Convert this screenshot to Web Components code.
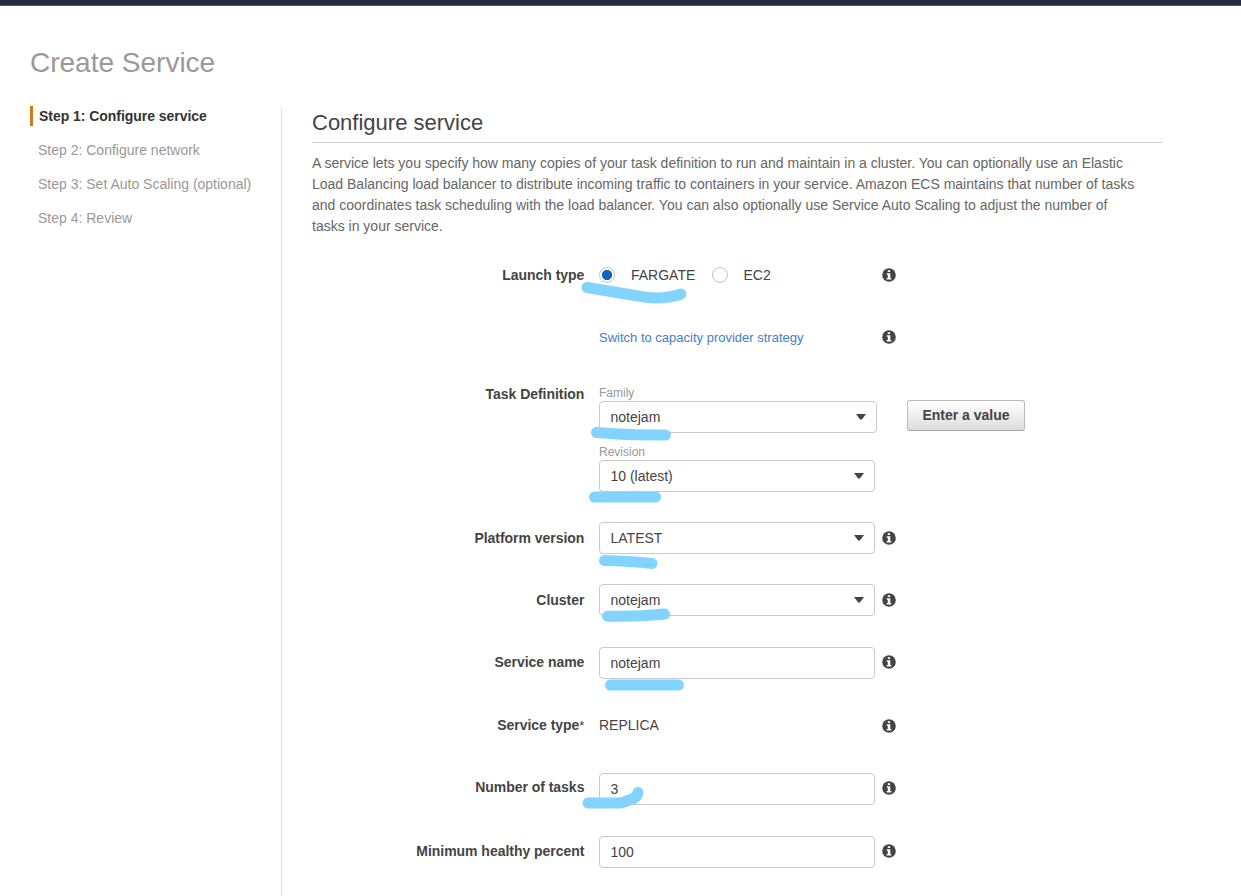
<!DOCTYPE html>
<html lang="en">
<head>
<meta charset="utf-8">
<title>Create Service</title>
<style>
html,body{margin:0;padding:0;height:896px;overflow:hidden;background:#fff}
body{font:14px/21px "Liberation Sans",Arial,sans-serif;color:#444}
</style>
</head>
<body>
<service-wizard>
  <wizard-steps slot="steps">
    <wizard-step current>Step 1: Configure service</wizard-step>
    <wizard-step>Step 2: Configure network</wizard-step>
    <wizard-step>Step 3: Set Auto Scaling (optional)</wizard-step>
    <wizard-step>Step 4: Review</wizard-step>
  </wizard-steps>
  <form-row label="Launch type" info style="margin-top:22px">
    <radio-option checked style="width:113px">FARGATE</radio-option><radio-option style="gap:15.5px">EC2</radio-option>
  </form-row>
  <form-row info style="margin-top:30px"><text-link>Switch to capacity provider strategy</text-link></form-row>
  <form-row label="Task Definition" style="margin-top:32px;--label-y:-7px;--align:start">
    <captioned-field caption="Family"><field-box menu style="width:278px">notejam</field-box></captioned-field>
    <captioned-field caption="Revision" style="margin-top:11px"><field-box menu>10 (latest)</field-box></captioned-field>
    <push-button slot="action">Enter a value</push-button>
  </form-row>
  <form-row label="Platform version" info style="margin-top:30px"><field-box menu>LATEST</field-box></form-row>
  <form-row label="Cluster" info style="margin-top:30px"><field-box menu>notejam</field-box></form-row>
  <form-row label="Service name" info style="margin-top:31px;--label-y:-1px;--icon-y:-1px"><field-box>notejam</field-box></form-row>
  <form-row label="Service type" required info style="margin-top:30px;--icon-y:1px">REPLICA</form-row>
  <form-row label="Number of tasks" info style="margin-top:32px;--label-y:-2px;--icon-y:-1px"><field-box>3</field-box></form-row>
  <form-row label="Minimum healthy percent" info style="margin-top:31px;--label-y:-1px;--icon-y:-1px"><field-box>100</field-box></form-row>
</service-wizard>
<marker-strokes></marker-strokes>
<script>
const define = (name, markup) => customElements.define(name, class extends HTMLElement {
  constructor() {
    super();
    this.attachShadow({mode: 'open'}).innerHTML = typeof markup === 'function' ? markup(this) : markup;
  }
});

define('service-wizard', `<style>
:host{display:flex;flex-direction:column;height:896px}
.bar{height:5px;flex:none;background:#232f3e;border-bottom:1px solid #4d5763}
h1{margin:37px 0 0 30px;font-size:28px;line-height:40px;font-weight:400;color:#999}
.body{display:flex;flex:1;margin:23px 0 0 30px;min-height:0}
.steps{width:251px;flex:none}
main{width:850px;border-left:1px solid #ddd;padding-left:30px;margin-top:3px}
h2{margin:0;height:33px;line-height:27px;font-size:22px;font-weight:400;border-bottom:1px solid #ccc}
p{margin:10px 0 0;width:830px;color:#666}
</style>
<div class="bar"></div><h1>Create Service</h1>
<div class="body"><div class="steps"><slot name="steps"></slot></div>
<main><h2>Configure service</h2>
<p>A service lets you specify how many copies of your task definition to run and maintain in a cluster. You can optionally use an Elastic Load Balancing load balancer to distribute incoming traffic to containers in your service. Amazon ECS maintains that number of tasks and coordinates task scheduling with the load balancer. You can also optionally use Service Auto Scaling to adjust the number of tasks in your service.</p>
<slot></slot></main></div>`);

define('wizard-steps', `<style>:host{display:flex;flex-direction:column;gap:14px}</style><slot></slot>`);
define('wizard-step', `<style>
:host{display:block;line-height:20px;padding-left:8px;color:#999;white-space:nowrap}
:host([current]){padding-left:6px;border-left:3px solid #d47b16;color:#333;font-weight:700;letter-spacing:-.04px}
</style><slot></slot>`);

define('info-icon', `<style>:host{display:block;width:14px;height:14px}svg{display:block}</style>
<svg width="14" height="14" viewBox="0 0 14 14"><circle cx="7" cy="7" r="6.8" fill="#444"/>
<path fill="#fff" d="M5.8 2.2h2.3v1.9H5.8zM4.8 5.3h3.5v4.6h1v1.5H4.7V9.9h1.1V6.8h-1z"/></svg>`);

define('form-row', el => `<style>
:host{display:grid;grid-template-columns:272px 276px 14px auto;column-gap:15px;align-items:var(--align,center);min-height:32px}
label{font-weight:700;text-align:right;line-height:32px;letter-spacing:-.03px;margin-right:-.4px;transform:translateY(var(--label-y,0))}
label span{font-size:13px;line-height:0;font-weight:400}
.control{color:#444}
info-icon{margin-left:-8px;transform:translateY(var(--icon-y,0))}
.action{margin:15px 0 0 -12px}
</style>
<label>${el.getAttribute('label') || ''}${el.hasAttribute('required') ? '<span>*</span>' : ''}</label>
<div class="control"><slot></slot></div>
${el.hasAttribute('info') ? '<info-icon></info-icon>' : '<i></i>'}
<div class="action"><slot name="action"></slot></div>`);

define('radio-option', `<style>
:host{display:inline-flex;align-items:center;gap:16px;height:32px;vertical-align:top}
i{box-sizing:border-box;width:16px;height:16px;border:1px solid #c4c4c4;border-radius:50%;background:#fff}
:host([checked]) i{background:radial-gradient(circle,#1166bb 4.7px,#fff 5.5px)}
</style><i></i><span><slot></slot></span>`);

define('text-link', `<style>:host{display:block;font-size:13px;color:#447dc8}</style><slot></slot>`);

define('captioned-field', el => `<style>:host{display:block}span{display:block;font-size:12px;line-height:16px;color:#999}</style>
<span>${el.getAttribute('caption')}</span><slot></slot>`);

define('field-box', el => `<style>
:host{box-sizing:border-box;display:flex;align-items:center;justify-content:space-between;width:276px;height:32px;padding:0 10px 0 10.5px;border:1px solid #c8c8c8;border-radius:4px;background:#fff;color:#444}
</style><span><slot></slot></span>${el.hasAttribute('menu') ? '<svg width="10" height="6" viewBox="0 0 10 6"><path d="M0 0h10L5.9 5.6H4.1z" fill="#444"/></svg>' : ''}`);

define('push-button', `<style>
:host{box-sizing:border-box;display:flex;align-items:center;justify-content:center;width:118px;height:31px;border:1px solid #bbb;border-bottom-color:#a5a5a5;border-radius:3px;background:linear-gradient(#fff,#ddd);font-weight:700;color:#444}
</style><slot></slot>`);

define('marker-strokes', `<style>:host{position:absolute;left:0;top:0;pointer-events:none}svg{display:block}</style>
<svg width="1241" height="896" fill="none" stroke="#82d4ff" stroke-width="11" stroke-linecap="round" stroke-linejoin="round">
<path d="M587 287.5L644 297Q664 300 681 294"/>
<path d="M596.500 432.500Q622 435 665.500 435"/>
<path d="M594.500 497H655.500"/>
<path d="M604.500 560.500Q630 561 652 563.500"/>
<path d="M607.500 616.200Q637 617 664.500 614"/>
<path d="M610.500 685H678.500"/>
<path d="M588 803H620Q624 802.500 629 800Q637 798.500 638 792.500"/>
</svg>`);
</script>
</body>
</html>
